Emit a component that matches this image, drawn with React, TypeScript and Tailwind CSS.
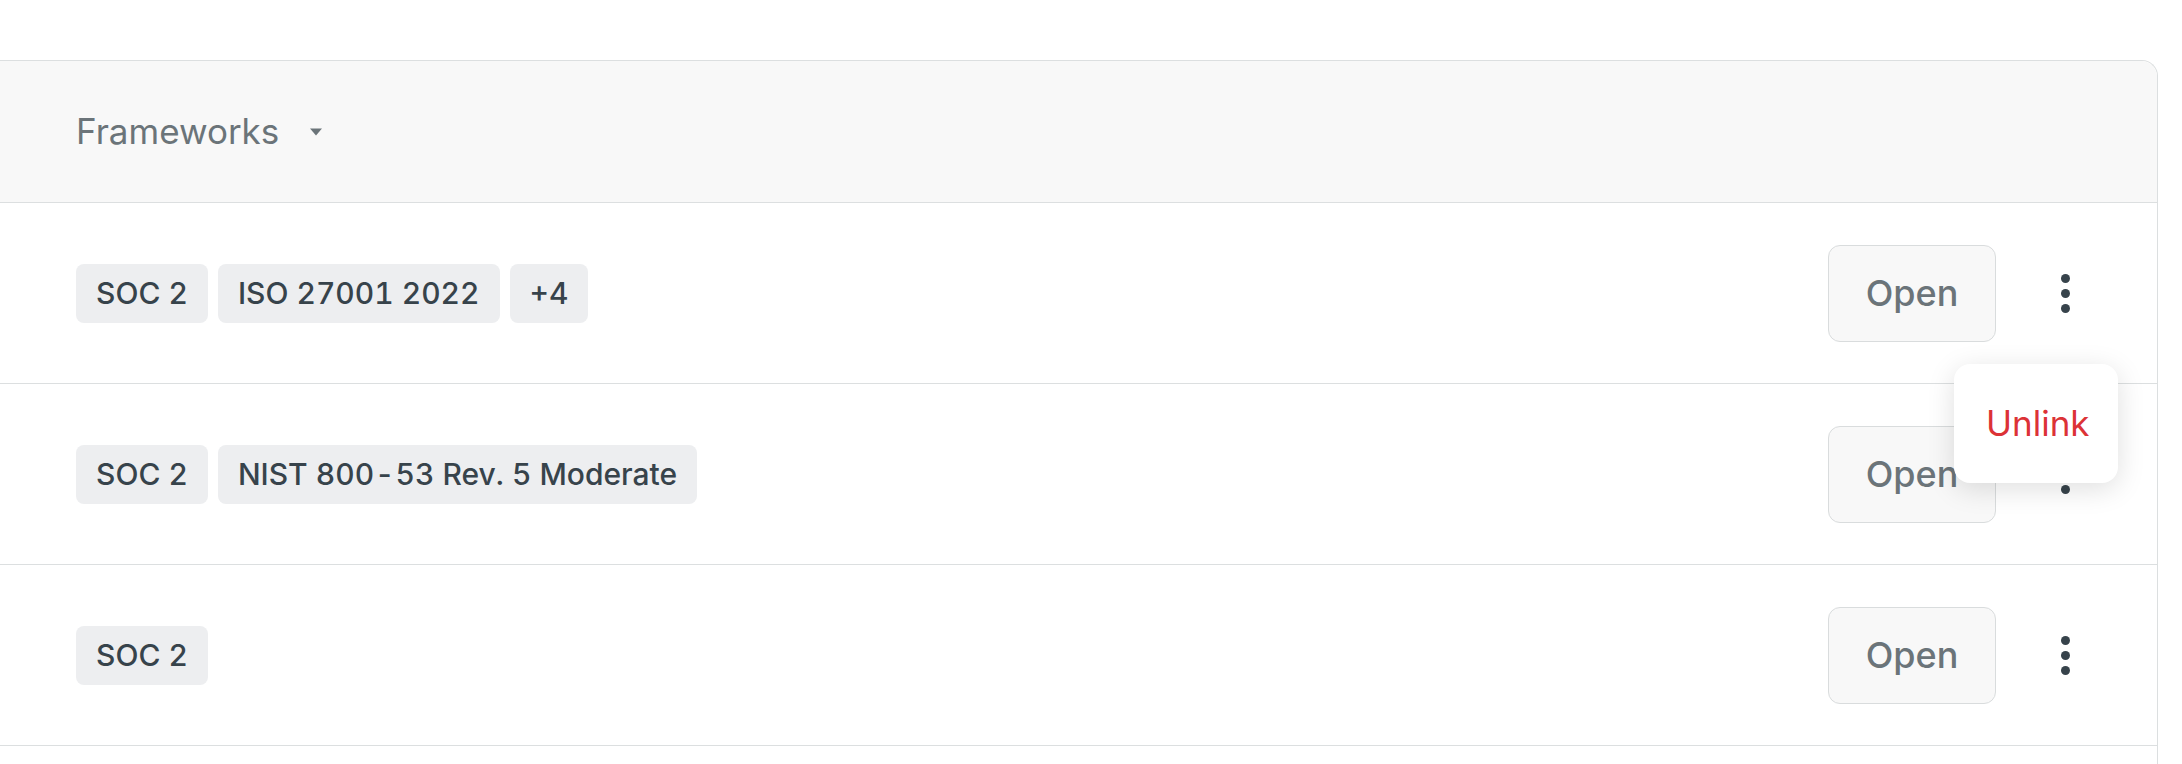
import React from "react";

type Row = { tags: React.ReactNode[] };

const ROWS: Row[] = [
  { tags: ["SOC 2", "ISO 27001 2022", "+4"] },
  {
    tags: [
      "SOC 2",
      <>
        NIST 800<span className="mx-[1px]">-</span>53 Rev. 5 Moderate
      </>,
    ],
  },
  { tags: ["SOC 2"] },
];

function Caret() {
  return (
    <svg width="14" height="8" viewBox="0 0 14 8" className="ml-[30px]">
      <path d="M1 0.5h12L7 7.5z" fill="#6b7479" />
    </svg>
  );
}

function Kebab() {
  return (
    <button aria-label="More actions" className="ml-[45px] flex h-[48px] w-[48px] flex-col items-center justify-center gap-[6px]">
      <span className="h-[9px] w-[9px] rounded-full bg-[#37434b]" />
      <span className="h-[9px] w-[9px] rounded-full bg-[#37434b]" />
      <span className="h-[9px] w-[9px] rounded-full bg-[#37434b]" />
    </button>
  );
}

function Tag({ children }: { children: React.ReactNode }) {
  return (
    <span className="flex h-[59px] items-center rounded-[8px] bg-[#edeef0] px-[20px] text-[30px] font-medium tabular-nums text-[#37434b]">
      {children}
    </span>
  );
}

export default function App() {
  return (
    <div className="min-h-screen bg-white pt-[60px] pr-[24px] font-['Inter','Noto_Sans',sans-serif]">
      <div className="relative rounded-tr-[16px] border-t border-r border-[#dcdfe0]">
        {/* Column header */}
        <div className="flex h-[142px] items-center rounded-tr-[16px] border-b border-[#dcdfe0] bg-[#f8f8f8] pl-[76px]">
          <span className="text-[35px] text-[#6b7479]">Frameworks</span>
          <Caret />
        </div>

        {ROWS.map((row, i) => (
          <div key={i} className="flex h-[181px] items-center border-b border-[#dcdfe0] pl-[76px] pr-[68px]">
            <div className="flex flex-1 items-center gap-[10px]">
              {row.tags.map((t, j) => (
                <Tag key={j}>{t}</Tag>
              ))}
            </div>
            <button className="flex h-[97px] w-[168px] items-center justify-center rounded-[12px] border border-[#d9dcdd] bg-[#f8f8f8] text-[36px] font-medium text-[#6b7479]">
              Open
            </button>
            <Kebab />
          </div>
        ))}

        {/* next row continues below the fold */}
        <div className="h-[60px]" />

        {/* Row menu, open on the first row */}
        <div className="absolute top-[303px] right-[39px] flex h-[119px] w-[164px] items-center rounded-[16px] bg-white pl-[32px] shadow-[0_6px_28px_rgba(0,0,0,0.13)]">
          <span className="text-[35px] text-[#dc3236]">Unlink</span>
        </div>
      </div>
    </div>
  );
}
